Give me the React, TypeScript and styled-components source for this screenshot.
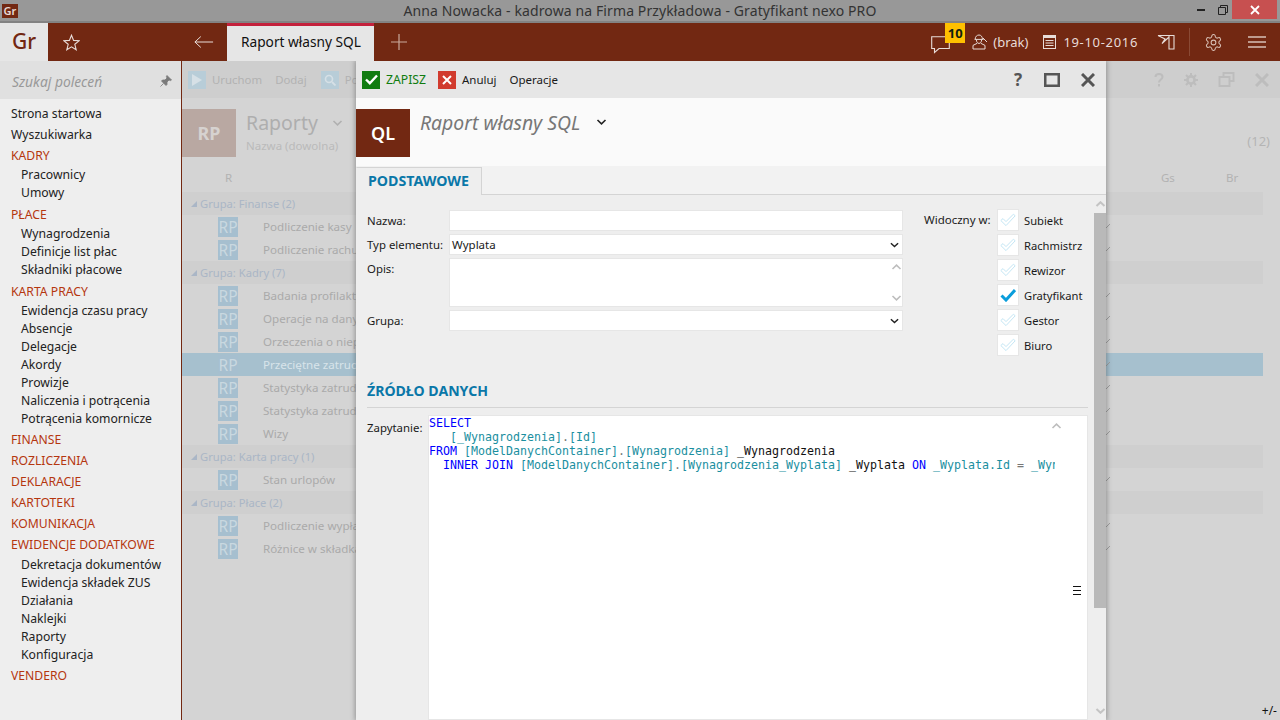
import React from "react";
import styled, { createGlobalStyle } from "styled-components";

const Global = createGlobalStyle`
  html, body { margin: 0; padding: 0; width: 1280px; height: 720px; overflow: hidden; background: #d4d4d4; }
  body { font-family: "Noto Sans", "Open Sans", sans-serif; font-size: 12px; color: #1a1a1a; }
  * { box-sizing: border-box; }
`;
const BROWN = "#722812";
const BLUE = "#0a77a8";

const Page = styled.div`width:1280px;height:720px;display:flex;flex-direction:column;overflow:hidden;`;
const TitleBar = styled.div`height:23px;flex:none;background:#989898;border-bottom:2px solid #838383;display:grid;grid-template-columns:1fr auto 1fr;align-items:start;`;
const AppIcon = styled.div`width:16px;height:14px;margin:4px 0 0 2px;background:${BROWN};color:#e8dcd8;font-size:11px;font-weight:600;line-height:14px;text-align:center;`;
const TitleText = styled.div`font-size:14px;line-height:22px;color:#333;white-space:nowrap;letter-spacing:.008em;`;
const WinControls = styled.div`justify-self:end;display:flex;align-items:flex-start;padding-right:3px;`;
const WinBtn = styled.div<{ $w: number; $red?: boolean }>`width:${p => p.$w}px;height:19px;background:${p => p.$red ? "#c75050" : "transparent"};display:flex;align-items:center;justify-content:center;`;

const TopBar = styled.div`height:38px;flex:none;background:${BROWN};display:flex;align-items:center;color:#e8dcd8;`;
const Logo = styled.div`width:48px;height:38px;background:#e6e6e6;color:${BROWN};font-size:21px;font-weight:500;line-height:37px;text-align:center;`;
const TopIcon = styled.div<{ $w: number; $ml?: number }>`width:${p => p.$w}px;margin-left:${p => p.$ml ?? 0}px;height:38px;flex:none;display:flex;align-items:center;justify-content:center;`;
const Tab = styled.div`width:147px;height:38px;margin-left:13px;background:#e6e6e6;border-top:3px solid #c4213c;color:#111;font-size:13.7px;line-height:31px;padding-left:14px;white-space:nowrap;`;
const Spacer = styled.div`flex:1;`;
const TopText = styled.span<{ $ml: number; $ls?: number }>`margin-left:${p => p.$ml}px;font-size:13px;white-space:nowrap;color:#e8dcd8;letter-spacing:${p => p.$ls ?? 0}em;`;
const Badge = styled.div`position:absolute;left:15px;top:0;width:20px;height:20px;background:#ffc000;color:#102010;font-size:13px;font-weight:700;line-height:20px;text-align:center;`;
const BubbleWrap = styled.div`position:relative;width:34px;height:38px;flex:none;display:flex;align-items:center;padding-left:1px;`;
const TopDivider = styled.div`width:1px;height:28px;margin-left:14px;background:#8a4a35;`;

const Main = styled.div`flex:1;display:flex;min-height:0;`;
const Sidebar = styled.aside`width:182px;flex:none;background:#eee;border-right:1px solid ${BROWN};display:flex;flex-direction:column;`;
const SearchBox = styled.div`height:38px;flex:none;background:#e0e0e0;display:flex;align-items:center;justify-content:space-between;padding:2px 9px 0 12px;color:#999;font-style:italic;font-size:13.8px;`;
const Nav = styled.nav`padding-top:4px;display:flex;flex-direction:column;`;
const NavItem = styled.div`height:21px;line-height:21px;padding-left:11px;font-size:12.2px;color:#222;white-space:nowrap;`;
const NavHead = styled(NavItem)`color:#b5360f;`;
const SubList = styled.div`padding-top:.4px;margin-bottom:1.4px;display:flex;flex-direction:column;`;
const SubItem = styled.div`height:18px;line-height:18px;padding-left:21px;font-size:12.2px;color:#222;white-space:nowrap;`;

const Content = styled.main`flex:1;position:relative;background:#d4d4d4;min-width:0;overflow:hidden;`;
const BgToolbar = styled.div`height:37px;background:#cecece;display:flex;align-items:center;padding:0 6px;color:#b2b2b2;font-size:11.4px;`;
const BgTool = styled.div<{ $ml?: number }>`width:18px;height:18px;margin-left:${p => p.$ml ?? 0}px;background:#b8cdd8;display:flex;align-items:center;justify-content:center;flex:none;`;
const BgLabel = styled.span<{ $ml: number }>`margin-left:${p => p.$ml}px;white-space:nowrap;`;
const BgRight = styled.div`position:absolute;right:0;top:0;height:37px;display:flex;align-items:center;gap:20px;padding-right:11px;`;
const BgHead = styled.div`height:70px;display:flex;align-items:flex-start;padding-top:11px;position:relative;`;
const BgTile = styled.div`width:54px;height:48px;background:#b9a8a2;color:#d6d2d0;font-size:18px;font-weight:700;line-height:48px;text-align:center;`;
const BgTitleRow = styled.div`display:flex;align-items:center;gap:14px;margin-left:10px;height:28px;`;
const BgTitle = styled.div`color:#aeaeae;font-size:19.5px;line-height:28px;`;
const BgSub = styled.div`margin-left:10px;color:#bababa;font-size:11.5px;line-height:18px;white-space:nowrap;`;
const BgCount = styled.div`position:absolute;right:10px;top:34px;color:#b4b4b4;font-size:13px;`;
const ColHead = styled.div`height:24px;display:grid;grid-template-columns:43px 1fr 65px 37px;color:#b2b2b2;font-size:11.5px;line-height:20px;width:1081px;`;
const Grid = styled.div`width:1081px;display:flex;flex-direction:column;`;
const GroupRow = styled.div`height:23px;background:#cfcfcf;display:flex;align-items:center;color:#aab6c6;font-size:11.2px;padding-left:8px;gap:2px;`;
const DataRow = styled.div<{ $sel?: boolean }>`height:23px;background:${p => p.$sel ? "#a6c0ce" : "transparent"};display:grid;grid-template-columns:36px 20px 25px 1fr 160px;align-items:center;color:${p => p.$sel ? "#d8e4ea" : "#aaaaaa"};font-size:11.6px;white-space:nowrap;`;
const RpIcon = styled.div`grid-column:2;width:20px;height:20px;background:#a6bfcf;color:#c9d8e0;font-size:15.5px;line-height:20px;text-align:center;overflow:hidden;`;
const RowMark = styled.div`display:flex;align-items:center;`;
const Plus = styled.div`position:absolute;right:3px;bottom:2px;color:#111;font-size:12px;line-height:14px;`;

const Dialog = styled.section`position:absolute;left:174px;top:0;bottom:0;width:750px;background:#eee;box-shadow:0 0 5px 1px rgba(0,0,0,.3);display:flex;flex-direction:column;`;
const DlgToolbar = styled.div`height:37px;flex:none;background:#e6e6e6;display:flex;align-items:center;padding-left:6px;font-size:11.5px;color:#1a1a1a;`;
const Square = styled.div<{ $c: string; $ml?: number }>`width:18px;height:18px;margin-left:${p => p.$ml ?? 0}px;flex:none;background:${p => p.$c};display:flex;align-items:center;justify-content:center;`;
const ToolText = styled.span<{ $ml: number; $green?: boolean }>`margin-left:${p => p.$ml}px;white-space:nowrap;color:${p => p.$green ? "#107c10" : "inherit"};font-size:${p => p.$green ? "12.2px" : "inherit"};`;
const DlgActions = styled.div`margin-left:auto;display:flex;align-items:center;padding-right:3px;`;
const ActionCell = styled.div<{ $w: number }>`width:${p => p.$w}px;display:flex;justify-content:center;align-items:center;`;
const HelpMark = styled.span`font-size:17px;font-weight:700;color:#555;line-height:20px;`;
const DlgHead = styled.div`height:68px;flex:none;background:#fafafa;display:flex;align-items:flex-start;padding-top:11px;`;
const QlTile = styled.div`width:54px;height:48px;background:${BROWN};color:#fff;font-size:18px;font-weight:600;line-height:48px;text-align:center;`;
const DlgTitle = styled.div`margin-left:10px;font-size:19.4px;font-style:italic;color:#777;line-height:28px;white-space:nowrap;`;
const TitleChevron = styled.div`margin-left:16px;height:26px;display:flex;align-items:center;`;
const TabStrip = styled.div`height:29px;flex:none;background:#f2f2f2;border-bottom:1px solid #d4d4d4;padding-top:1px;`;
const FormTab = styled.div`width:126px;height:28px;background:#eee;border:1px solid #d4d4d4;border-left-color:#eee;border-bottom:none;color:${BLUE};font-size:14.2px;font-weight:700;line-height:26px;padding-left:11px;white-space:nowrap;`;
const DlgBody = styled.div`flex:1;min-height:0;display:flex;`;
const BodyMain = styled.div`flex:1;min-width:0;padding:14px 6px 0 11px;display:flex;flex-direction:column;`;
const Scrollbar = styled.div`width:12px;flex:none;display:flex;flex-direction:column;align-items:center;`;
const ScrollArrow = styled.div`height:18px;flex:none;display:flex;align-items:center;justify-content:center;width:100%;`;
const Thumb = styled.div`width:100%;height:395px;background:#b9b9b9;`;
const ScrollFill = styled.div`flex:1;`;
const FormTop = styled.div`display:flex;align-items:flex-start;`;
const Fields = styled.div`display:grid;grid-template-columns:82px 454px;grid-template-rows:21px 21px 49px 21px;row-gap:3px;margin-top:1px;`;
const FieldLabel = styled.div`font-size:11.4px;line-height:21px;color:#1a1a1a;white-space:nowrap;`;
const Input = styled.div`background:#fff;border:1px solid #e6e6e6;display:flex;align-items:center;justify-content:space-between;padding:0 3px 0 2px;font-size:11.5px;color:#1a1a1a;`;
const Area = styled(Input)`flex-direction:column;align-items:flex-end;padding:5px 0;`;
const Visible = styled.div`display:flex;margin-left:21px;`;
const VisibleLabel = styled.div`width:73px;font-size:11.5px;line-height:22px;white-space:nowrap;`;
const CheckList = styled.div`display:flex;flex-direction:column;gap:3px;`;
const CheckRow = styled.div`display:flex;align-items:center;height:22px;gap:5px;font-size:11.2px;white-space:nowrap;`;
const CheckBox = styled.div`width:22px;height:22px;background:#fff;border:1px solid #e6e6e6;display:flex;align-items:center;justify-content:center;flex:none;`;
const SectionTitle = styled.h2`margin:25px 0 0;height:27px;line-height:20px;border-bottom:1px solid #d4d4d4;color:${BLUE};font-size:14.1px;font-weight:700;`;
const EditorRow = styled.div`flex:1;min-height:0;display:flex;margin-top:7px;`;
const EditorLabel = styled.div`width:61px;flex:none;font-size:11.4px;line-height:25px;`;
const Editor = styled.div`flex:1;background:#fff;border:1px solid #e6e6e6;position:relative;min-width:0;`;
const Code = styled.pre`margin:0;width:626px;height:100%;overflow:hidden;font-family:"DejaVu Sans Mono",monospace;font-size:11.63px;line-height:14px;color:#111;`;
const Kw = styled.span`color:#0000ff;`;
const Id = styled.span`color:#1a8f9f;`;
const Pn = styled.span`color:#777;`;
const EditorUp = styled.div`position:absolute;right:25px;top:0;`;
const EditorMenu = styled.div`position:absolute;right:6px;top:170px;width:8px;height:9px;border-top:1px solid #111;border-bottom:1px solid #111;display:flex;align-items:center;`;
const MenuBar = styled.div`width:100%;height:1px;background:#111;`;

const Chevron = ({ c = "#222", up = false, w = 9, sw = 1.6 }: { c?: string; up?: boolean; w?: number; sw?: number }) => (
  <svg width={w} height={6} viewBox="0 0 10 6"><path d={up ? "M1 5 5 1.2 9 5" : "M1 1 5 4.8 9 1"} fill="none" stroke={c} strokeWidth={sw} /></svg>
);
const Tick = ({ on }: { on: boolean }) => on ? (
  <svg width="16" height="14" viewBox="0 0 16 14"><path d="M1.5 7.5 6 12 15 2" fill="none" stroke="#0a9ddb" strokeWidth="3" /></svg>
) : (
  <svg width="16" height="14" viewBox="0 0 16 14"><path d="M.8 7.5 3 5.6 6 8.6 13.4 1.2 15.2 2.8 6 12.6Z" fill="#fff" stroke="#c4e6f4" strokeWidth="1" /></svg>
);
const Mark = () => (<svg width="8" height="8" viewBox="0 0 8 8"><path d="M1 7 7 1" stroke="#a0a0a0" strokeWidth="1" /></svg>);
const Triangle = () => (<svg width="8" height="8" viewBox="0 0 8 8"><path d="M1 7H7V1Z" fill="#aab6c6" /></svg>);

const NAV: [string, string[]][] = [
  ["KADRY", ["Pracownicy", "Umowy"]],
  ["PŁACE", ["Wynagrodzenia", "Definicje list płac", "Składniki płacowe"]],
  ["KARTA PRACY", ["Ewidencja czasu pracy", "Absencje", "Delegacje", "Akordy", "Prowizje", "Naliczenia i potrącenia", "Potrącenia komornicze"]],
  ["FINANSE", []], ["ROZLICZENIA", []], ["DEKLARACJE", []], ["KARTOTEKI", []], ["KOMUNIKACJA", []],
  ["EWIDENCJE DODATKOWE", ["Dekretacja dokumentów", "Ewidencja składek ZUS", "Działania", "Naklejki", "Raporty", "Konfiguracja"]],
  ["VENDERO", []],
];
const GROUPS: [string, string[]][] = [
  ["Grupa: Finanse (2)", ["Podliczenie kasy", "Podliczenie rachunków"]],
  ["Grupa: Kadry (7)", ["Badania profilaktyczne", "Operacje na danych", "Orzeczenia o niepełnosprawności", "Przeciętne zatrudnienie", "Statystyka zatrudnienia", "Statystyka zatrudnienia wg", "Wizy"]],
  ["Grupa: Karta pracy (1)", ["Stan urlopów"]],
  ["Grupa: Płace (2)", ["Podliczenie wypłat", "Różnice w składkach"]],
];
const CHECKS = ["Subiekt", "Rachmistrz", "Rewizor", "Gratyfikant", "Gestor", "Biuro"];

const G = "#bdbdbd";

export default function App() {
  return (
    <Page>
      <Global />
      <TitleBar>
        <AppIcon>Gr</AppIcon>
        <TitleText>Anna Nowacka - kadrowa na Firma Przykładowa - Gratyfikant nexo PRO</TitleText>
        <WinControls>
          <WinBtn $w={26}><svg width="8" height="3" viewBox="0 0 8 3"><rect width="8" height="2" y="1" fill="#222" /></svg></WinBtn>
          <WinBtn $w={18}><svg width="10" height="10" viewBox="0 0 10 10"><path d="M2.5 2.5V.5h7v7h-2M.5 2.5h7v7h-7Z" fill="none" stroke="#222" /></svg></WinBtn>
          <WinBtn $w={45} $red><svg width="10" height="10" viewBox="0 0 10 10"><path d="M1 1 9 9M9 1 1 9" stroke="#fff" strokeWidth="1.8" /></svg></WinBtn>
        </WinControls>
      </TitleBar>
      <TopBar>
        <Logo>Gr</Logo>
        <TopIcon $w={46}>
          <svg width="17" height="17" viewBox="0 0 17 17"><path d="M8.5 1.2 10.6 6.4 16 6.8 11.8 10.3 13.2 15.8 8.500 12.800 3.800 15.800 5.200 10.300 1 6.800 6.400 6.400Z" fill="none" stroke="#e8dcd8" strokeWidth="1.1" /></svg>
        </TopIcon>
        <TopIcon $w={20} $ml={100}>
          <svg width="20" height="14" viewBox="0 0 22 14"><path d="M21 7H1M7.500 1 1 7l6.500 6" fill="none" stroke="#e8dcd8" strokeWidth="1.1" /></svg>
        </TopIcon>
        <Tab>Raport własny SQL</Tab>
        <TopIcon $w={50}>
          <svg width="16" height="16" viewBox="0 0 16 16"><path d="M8 0v16M0 8h16" stroke="#c9a99c" strokeWidth="1.2" /></svg>
        </TopIcon>
        <Spacer />
        <BubbleWrap>
          <svg width="19" height="18" viewBox="0 0 19 18" style={{ marginTop: 5 }}><path d="M.7 .7H18.300V12.500H8L3.500 16.500V12.500H.7Z" fill="none" stroke="#e8dcd8" strokeWidth="1.1" /></svg>
          <Badge>10</Badge>
        </BubbleWrap>
        <TopIcon $w={16} $ml={8}>
          <svg width="16" height="16" viewBox="0 0 16 16"><path d="M3.200 5.200C3.200 2.600 5 1 7 1s3.400 1.600 3.400 4.200M2.600 5.400h9M4.400 5.600c0 2.400 1 3.800 2.600 3.800s2.600-1.400 2.600-3.800M5 9.400 1 11.400V15h12v-3.600l-4-2M11 4l4 4" fill="none" stroke="#e8dcd8" strokeWidth="1" /></svg>
        </TopIcon>
        <TopText $ml={5}>(brak)</TopText>
        <TopIcon $w={13} $ml={15}>
          <svg width="13" height="14" viewBox="0 0 13 14"><rect width="13" height="14" fill="#e8dcd8" /><rect x="1" y="3" width="11" height="10" fill={BROWN} /><path d="M2.500 5h8v1h-8zM2.500 7.500h8v1h-8zM2.500 10h8v1h-8z" fill="#e8dcd8" /></svg>
        </TopIcon>
        <TopText $ml={7} $ls={0.052}>19-10-2016</TopText>
        <TopIcon $w={18} $ml={19}>
          <svg width="18" height="16" viewBox="0 0 18 16"><path d="M1 1.500H17V15H12V1.500M1 1.500 8 5 5 9.500 11.500 3.500" fill="none" stroke="#e8dcd8" strokeWidth="1.1" /></svg>
        </TopIcon>
        <TopDivider />
        <TopIcon $w={20} $ml={13}>
          <svg width="19" height="19" viewBox="0 0 24 24"><path d="M12.200 2h-.4a2 2 0 0 0-2 2v.2a2 2 0 0 1-1 1.700l-.4.3a2 2 0 0 1-2 0l-.2-.1a2 2 0 0 0-2.700.7l-.2.4a2 2 0 0 0 .7 2.700l.2.1a2 2 0 0 1 1 1.700v.6a2 2 0 0 1-1 1.700l-.2.1a2 2 0 0 0-.7 2.700l.2.4a2 2 0 0 0 2.700.7l.2-.1a2 2 0 0 1 2 0l.4.3a2 2 0 0 1 1 1.700v.2a2 2 0 0 0 2 2h.4a2 2 0 0 0 2-2v-.2a2 2 0 0 1 1-1.700l.4-.3a2 2 0 0 1 2 0l.2.1a2 2 0 0 0 2.700-.7l.2-.4a2 2 0 0 0-.7-2.700l-.2-.1a2 2 0 0 1-1-1.700v-.6a2 2 0 0 1 1-1.700l.2-.1a2 2 0 0 0 .7-2.700l-.2-.4a2 2 0 0 0-2.700-.7l-.2.1a2 2 0 0 1-2 0l-.4-.3a2 2 0 0 1-1-1.700V4a2 2 0 0 0-2-2Z" fill="none" stroke="#d8c0b6" strokeWidth="1.300" /><circle cx="12" cy="12" r="3" fill="none" stroke="#d8c0b6" strokeWidth="1.300" /></svg>
        </TopIcon>
        <TopIcon $w={18} $ml={25}>
          <svg width="18" height="12" viewBox="0 0 18 12"><path d="M0 1h18M0 6h18M0 11h18" stroke="#d8c0b6" strokeWidth="1.400" /></svg>
        </TopIcon>
        <TopIcon $w={14} />
      </TopBar>
      <Main>
        <Sidebar>
          <SearchBox>
            Szukaj poleceń
            <svg width="12" height="12" viewBox="0 0 12 12"><path d="M7 .5 11.500 5 10.500 5.600 9 5 7 7 7 9.500 6 10.500 1.500 6 2.500 5 5 5 7 3 6.400 1.500ZM3.500 8.500 .5 11.500" fill="#7a7a7a" stroke="#7a7a7a" strokeWidth=".8" /></svg>
          </SearchBox>
          <Nav>
            <NavItem>Strona startowa</NavItem>
            <NavItem>Wyszukiwarka</NavItem>
            {NAV.map(([head, subs]) => (
              <React.Fragment key={head}>
                <NavHead>{head}</NavHead>
                {subs.length > 0 && <SubList>{subs.map(s => <SubItem key={s}>{s}</SubItem>)}</SubList>}
              </React.Fragment>
            ))}
          </Nav>
        </Sidebar>
        <Content>
          <BgToolbar>
            <BgTool><svg width="10" height="12" viewBox="0 0 10 12"><path d="M0 0 10 6 0 12Z" fill="#d6e0e6" /></svg></BgTool>
            <BgLabel $ml={6}>Uruchom</BgLabel>
            <BgLabel $ml={13}>Dodaj</BgLabel>
            <BgTool $ml={14}><svg width="12" height="12" viewBox="0 0 12 12"><circle cx="5" cy="5" r="3.500" fill="none" stroke="#d6e0e6" strokeWidth="1.600" /><path d="M8 8 11.500 11.500" stroke="#d6e0e6" strokeWidth="1.800" /></svg></BgTool>
            <BgLabel $ml={6}>Pokaż</BgLabel>
            <BgRight>
              <svg width="10" height="14" viewBox="0 0 10 14"><path d="M1.500 4C1.500 2 3 1 5 1s3.500 1.200 3.500 3C8.500 6.500 5 6.500 5 9.500M5 11v2.500" fill="none" stroke={G} strokeWidth="2" /></svg>
              <svg width="14" height="14" viewBox="0 0 14 14"><circle cx="7" cy="7" r="3.600" fill="none" stroke={G} strokeWidth="2.600" /><path d="M7 0v3M7 11v3M0 7h3M11 7h3M2 2l2 2M10 10l2 2M2 12l2-2M10 4l2-2" stroke={G} strokeWidth="2" /></svg>
              <svg width="17" height="16" viewBox="0 0 16 16"><path d="M5 4V1h10v8h-3M1 5h10v9H1Z" fill="none" stroke={G} strokeWidth="2" /></svg>
              <svg width="14" height="14" viewBox="0 0 14 14"><path d="M1 1 13 13M13 1 1 13" stroke={G} strokeWidth="3" /></svg>
            </BgRight>
          </BgToolbar>
          <BgHead>
            <BgTile>RP</BgTile>
            <div>
              <BgTitleRow><BgTitle>Raporty</BgTitle><Chevron c="#b0b0b0" w={11} /></BgTitleRow>
              <BgSub>Nazwa (dowolna)</BgSub>
            </div>
            <BgCount>(12)</BgCount>
          </BgHead>
          <ColHead>
            <span />
            <span>R</span>
            <span>Gs</span>
            <span>Br</span>
          </ColHead>
          <Grid>
            {GROUPS.map(([g, rows]) => (
              <React.Fragment key={g}>
                <GroupRow><Triangle />{g}</GroupRow>
                {rows.map(r => (
                  <DataRow key={r} $sel={r === "Przeciętne zatrudnienie"}>
                    <RpIcon>RP</RpIcon>
                    <span />
                    <span>{r}</span>
                    <RowMark><Mark /></RowMark>
                  </DataRow>
                ))}
              </React.Fragment>
            ))}
          </Grid>
          <Plus>+/-</Plus>
          <Dialog>
            <DlgToolbar>
              <Square $c="#107c10"><svg width="13" height="11" viewBox="0 0 13 11"><path d="M1 5.500 4.800 9.200 12 1.500" fill="none" stroke="#fff" strokeWidth="2.400" /></svg></Square>
              <ToolText $ml={6} $green>ZAPISZ</ToolText>
              <Square $c="#d13b2e" $ml={12}><svg width="10" height="10" viewBox="0 0 10 10"><path d="M1 1 9 9M9 1 1 9" stroke="#fff" strokeWidth="2" /></svg></Square>
              <ToolText $ml={6}>Anuluj</ToolText>
              <ToolText $ml={13}>Operacje</ToolText>
              <DlgActions>
                <ActionCell $w={26}><HelpMark>?</HelpMark></ActionCell>
                <ActionCell $w={42}><svg width="16" height="14" viewBox="0 0 16 14"><rect x="1.250" y="1.250" width="13.500" height="11.500" fill="none" stroke="#555" strokeWidth="2.500" /></svg></ActionCell>
                <ActionCell $w={30}><svg width="14" height="14" viewBox="0 0 14 14"><path d="M1 1 13 13M13 1 1 13" stroke="#555" strokeWidth="3" /></svg></ActionCell>
              </DlgActions>
            </DlgToolbar>
            <DlgHead>
              <QlTile>QL</QlTile>
              <DlgTitle>Raport własny SQL</DlgTitle>
              <TitleChevron><Chevron w={11} /></TitleChevron>
            </DlgHead>
            <TabStrip><FormTab>PODSTAWOWE</FormTab></TabStrip>
            <DlgBody>
              <BodyMain>
                <FormTop>
                  <Fields>
                    <FieldLabel>Nazwa:</FieldLabel>
                    <Input />
                    <FieldLabel>Typ elementu:</FieldLabel>
                    <Input>Wyplata<Chevron /></Input>
                    <FieldLabel>Opis:</FieldLabel>
                    <Area><Chevron c="#bdbdbd" up w={11} /><Chevron c="#bdbdbd" w={11} /></Area>
                    <FieldLabel>Grupa:</FieldLabel>
                    <Input><span /><Chevron /></Input>
                  </Fields>
                  <Visible>
                    <VisibleLabel>Widoczny w:</VisibleLabel>
                    <CheckList>
                      {CHECKS.map(c => (
                        <CheckRow key={c}><CheckBox><Tick on={c === "Gratyfikant"} /></CheckBox>{c}</CheckRow>
                      ))}
                    </CheckList>
                  </Visible>
                </FormTop>
                <SectionTitle>ŹRÓDŁO DANYCH</SectionTitle>
                <EditorRow>
                  <EditorLabel>Zapytanie:</EditorLabel>
                  <Editor>
                    <Code><Kw>SELECT</Kw>{"\n   "}<Id>[_Wynagrodzenia]</Id><Pn>.</Pn><Id>[Id]</Id>{"\n"}<Kw>FROM</Kw> <Id>[ModelDanychContainer]</Id><Pn>.</Pn><Id>[Wynagrodzenia]</Id> _Wynagrodzenia{"\n  "}<Kw>INNER JOIN</Kw> <Id>[ModelDanychContainer]</Id><Pn>.</Pn><Id>[Wynagrodzenia_Wyplata]</Id> _Wyplata <Kw>ON</Kw> <Id>_Wyplata.Id</Id> <Pn>=</Pn> <Id>_Wynagrodzenia.Id</Id></Code>
                    <EditorUp><Chevron c="#bdbdbd" up w={11} /></EditorUp>
                    <EditorMenu><MenuBar /></EditorMenu>
                  </Editor>
                </EditorRow>
              </BodyMain>
              <Scrollbar>
                <ScrollArrow><Chevron c="#c4c4c4" up w={11} sw={2} /></ScrollArrow>
                <Thumb />
                <ScrollFill />
                <ScrollArrow><Chevron c="#c4c4c4" w={11} sw={2} /></ScrollArrow>
              </Scrollbar>
            </DlgBody>
          </Dialog>
        </Content>
      </Main>
    </Page>
  );
}
